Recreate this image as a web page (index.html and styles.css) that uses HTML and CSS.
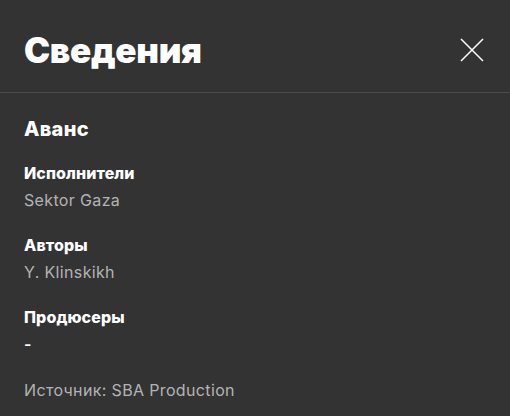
FILE: index.html
```html
<!DOCTYPE html>
<html lang="ru">
<head>
<meta charset="utf-8">
<link rel="stylesheet" href="styles.css">
</head>
<body>
<div class="dialog">
  <header class="head">
    <h1 class="title">Сведения</h1>
    <button class="close" aria-label="Закрыть">
      <svg width="24" height="24" viewBox="0 0 24 24"><path d="M1 1L23 23M23 1L1 23" stroke="#fff" stroke-width="1.5" fill="none"/></svg>
    </button>
  </header>
  <div class="body">
    <h2 class="track">Аванс</h2>
    <div class="group">
      <div class="label">Исполнители</div>
      <div class="value">Sektor Gaza</div>
    </div>
    <div class="group">
      <div class="label">Авторы</div>
      <div class="value">Y. Klinskikh</div>
    </div>
    <div class="group">
      <div class="label">Продюсеры</div>
      <div class="value dash">-</div>
    </div>
    <div class="source">Источник: SBA Production</div>
  </div>
</div>
</body>
</html>
```

FILE: styles.css
```css
html, body {
  margin: 0;
  padding: 0;
  background: #333333;
}
body {
  font-family: Inter, "Liberation Sans", Arial, sans-serif;
  color: #fff;
  width: 510px;
  height: 416px;
  overflow: hidden;
}
.head {
  display: flex;
  align-items: center;
  justify-content: space-between;
  height: 93px;
  padding: 0 26px 2px 24px;
  border-bottom: 1px solid #4a4a4a;
  box-sizing: border-box;
}
.title {
  margin: 0;
  font-size: 35px;
  font-weight: 900;
  letter-spacing: -0.3px;
  padding-top: 10px;
}
.close {
  background: none;
  border: 0;
  padding: 0;
  width: 24px;
  height: 24px;
  margin-top: 10px;
  display: flex;
}
.body {
  padding: 23px 24px 0;
}
.track {
  margin: 0 0 18px;
  font-size: 20px;
  font-weight: 800;
  letter-spacing: 0.3px;
  line-height: 26px;
}
.group {
  margin-bottom: 18px;
}
.label {
  font-size: 16px;
  font-weight: 800;
  letter-spacing: 0.1px;
  line-height: 26px;
}
.value {
  font-size: 16px;
  letter-spacing: 0.35px;
  color: #b3b3b3;
  line-height: 28px;
}
.dash {
  color: #fff;
  font-weight: 600;
}
.source {
  font-size: 16px;
  letter-spacing: 0.35px;
  color: #b3b3b3;
  line-height: 28px;
  margin-top: 0;
}
```
